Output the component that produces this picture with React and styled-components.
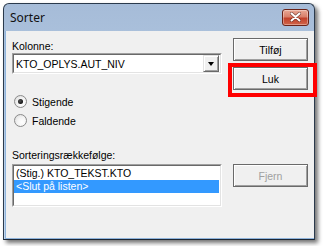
import React from "react"
import styled, { createGlobalStyle } from "styled-components"

const GlobalStyle = createGlobalStyle`
    html, body {
        margin: 0;
        padding: 0;
        background: #ffffff;
        font-family: "Liberation Sans", Arial, sans-serif;
    }
`

const Desktop = styled.div`
    width: 323px;
    height: 246px;
    padding: 3px 0 0 3px;
    box-sizing: border-box;
`

const Window = styled.div`
    position: relative;
    width: 312px;
    height: 237px;
    box-sizing: border-box;
    border: 1px solid #2b3a4c;
    border-bottom-color: #1c2633;
    border-radius: 6px 6px 0 0;
    background: linear-gradient(#a6bcd8 0%, #b4cae4 50%, #c3d7ee 100%);
    padding: 0 0 0 1px;
    display: flex;
    flex-direction: column;
    box-shadow: 3px 3px 4px rgba(0, 0, 0, 0.55);
`

const TitleBar = styled.div`
    height: 27px;
    display: flex;
    align-items: center;
    justify-content: space-between;
    padding: 0 5px 1px 5px;
    box-sizing: border-box;
`

const Title = styled.span`
    font-family: "Noto Sans", "Open Sans", sans-serif;
    font-size: 12px;
    color: #111;
    margin-top: 1px;
`

const CloseButton = styled.div`
    width: 27px;
    height: 17px;
    box-sizing: border-box;
    border: 1px solid #6b2318;
    border-radius: 3px;
    background: linear-gradient(#e9a895 0%, #d9806b 45%, #c2412b 55%, #d0654a 100%);
    box-shadow: inset 0 0 0 1px rgba(255, 255, 255, 0.35);
    display: flex;
    align-items: center;
    justify-content: center;
`

const Client = styled.div`
    flex: 1;
    background: #f0f0f0;
    border: 1px solid #8fb4dc;
    border-top: none;
    border-right: none;
    display: flex;
    gap: 11px;
    padding: 0 0 0 6px;
`

const LeftColumn = styled.div`
    width: 210px;
    display: flex;
    flex-direction: column;
`

const RightColumn = styled.div`
    width: 75px;
    display: flex;
    flex-direction: column;
    padding-top: 7px;
`

const Label = styled.div`
    font-size: 10.5px;
    line-height: 13px;
    height: 13px;
    color: #000;
    margin-top: ${p => p.$top}px;
`

const Sunken = styled.div`
    box-sizing: border-box;
    border-style: solid;
    border-width: 1px;
    border-color: #a0a0a0 #ffffff #ffffff #a0a0a0;
    background: #fff;
`

const SunkenInner = styled.div`
    border-style: solid;
    border-width: 1px;
    border-color: #696969 #e3e3e3 #e3e3e3 #696969;
    height: 100%;
    box-sizing: border-box;
`

const Combo = styled(Sunken)`
    height: 21px;
`

const ComboInner = styled(SunkenInner)`
    display: flex;
    align-items: center;
    justify-content: space-between;
    padding: 0 1px 0 2px;
    font-size: 10.5px;
    color: #000;
`

const DropButton = styled.div`
    width: 16px;
    height: 17px;
    box-sizing: border-box;
    background: #f0f0f0;
    border-style: solid;
    border-width: 1px;
    border-color: #e3e3e3 #696969 #696969 #e3e3e3;
    box-shadow: inset 1px 1px #ffffff, inset -1px -1px #a0a0a0;
    display: flex;
    align-items: center;
    justify-content: center;
`

const Arrow = styled.div`
    width: 0;
    height: 0;
    border-left: 3.5px solid transparent;
    border-right: 3.5px solid transparent;
    border-top: 4px solid #000;
    margin-top: 1px;
`

const RadioGroup = styled.div`
    display: flex;
    flex-direction: column;
    margin-top: 18px;
    padding-left: 2px;
`

const RadioRow = styled.label`
    height: 19px;
    display: flex;
    align-items: center;
    gap: 5px;
    font-size: 10.5px;
    color: #000;
`

const RadioCircle = styled.span`
    width: 13px;
    height: 13px;
    box-sizing: border-box;
    border-radius: 50%;
    border: 1px solid #8a8a8a;
    background: radial-gradient(circle at 65% 65%, #ffffff 0%, #f4f4f4 45%, #d6d6d6 100%);
    display: flex;
    align-items: center;
    justify-content: center;
`

const RadioDot = styled.span`
    width: 5px;
    height: 5px;
    border-radius: 50%;
    background: radial-gradient(circle at 40% 40%, #555 0%, #111 70%);
`

const ListBox = styled(Sunken)`
    height: 43px;
    margin-top: 2px;
`

const ListInner = styled(SunkenInner)`
    padding: 1px 1px 0 0;
`

const ListItem = styled.div`
    height: 13px;
    line-height: 13px;
    font-size: 10.5px;
    padding-left: 2px;
    color: ${p => (p.$selected ? "#ffffff" : "#000000")};
    background: ${p => (p.$selected ? "#3399ff" : "transparent")};
`

const Button = styled.div`
    height: 23px;
    box-sizing: border-box;
    background: #f0f0f0;
    border: 1px solid #6a6a6a;
    box-shadow: inset 1px 1px #ffffff, inset -1px -1px #a0a0a0;
    display: flex;
    align-items: center;
    justify-content: center;
    font-size: 10.5px;
    color: ${p => (p.$disabled ? "#a0a0a0" : "#000")};
    margin-top: ${p => p.$top || 0}px;
`

const Highlight = styled.div`
    position: absolute;
    left: 224px;
    top: 59px;
    width: 89px;
    height: 34px;
    box-sizing: border-box;
    border: 4px solid #ff0000;
    pointer-events: none;
`

function CloseGlyph() {
    return (
        <svg width="11" height="10" viewBox="0 0 11 10">
            <path d="M1.5 1.5 L9.5 8.5 M9.5 1.5 L1.5 8.5" stroke="#3a1510" strokeWidth="3.4" strokeLinecap="round" opacity="0.55" />
            <path d="M1.5 1.5 L9.5 8.5 M9.5 1.5 L1.5 8.5" stroke="#ffffff" strokeWidth="2" strokeLinecap="round" />
        </svg>
    )
}

function Radio({ checked, label }) {
    return (
        <RadioRow>
            <RadioCircle>{checked && <RadioDot />}</RadioCircle>
            {label}
        </RadioRow>
    )
}

export default function App() {
    return (
        <Desktop>
            <GlobalStyle />
            <Window>
                <TitleBar>
                    <Title>Sorter</Title>
                    <CloseButton>
                        <CloseGlyph />
                    </CloseButton>
                </TitleBar>
                <Client>
                    <LeftColumn>
                        <Label $top={9}>Kolonne:</Label>
                        <Combo>
                            <ComboInner>
                                <span>KTO_OPLYS.AUT_NIV</span>
                                <DropButton>
                                    <Arrow />
                                </DropButton>
                            </ComboInner>
                        </Combo>
                        <RadioGroup>
                            <Radio checked label="Stigende" />
                            <Radio label="Faldende" />
                        </RadioGroup>
                        <Label $top={19}>Sorteringsrækkefølge:</Label>
                        <ListBox>
                            <ListInner>
                                <ListItem>(Stig.) KTO_TEKST.KTO</ListItem>
                                <ListItem $selected>&lt;Slut på listen&gt;</ListItem>
                            </ListInner>
                        </ListBox>
                    </LeftColumn>
                    <RightColumn>
                        <Button>Tilføj</Button>
                        <Button $top={6}>Luk</Button>
                        <Button $top={74} $disabled>Fjern</Button>
                    </RightColumn>
                </Client>
                <Highlight />
            </Window>
        </Desktop>
    )
}
